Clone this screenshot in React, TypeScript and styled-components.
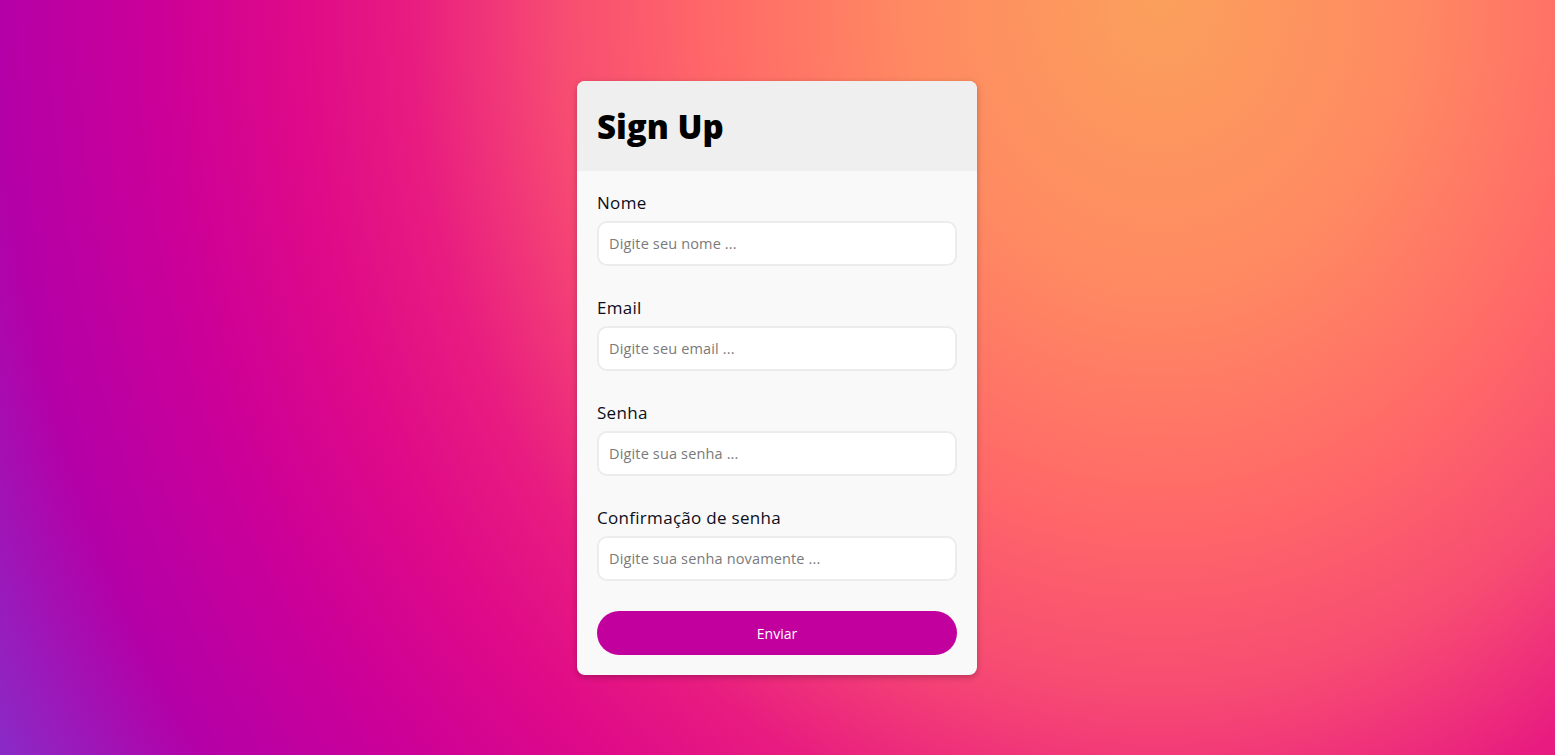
import React from 'react';
import styled, { createGlobalStyle } from 'styled-components';

const GlobalStyle = createGlobalStyle`
    * {
        box-sizing: border-box;
    }
    html, body {
        margin: 0;
        padding: 0;
        height: 100%;
    }
    body {
        font-family: 'Open Sans', 'Noto Sans', sans-serif;
    }
    #root {
        height: 100%;
    }
`;

// warm glow top-right fading to magenta / purple bottom-left
const Page = styled.main`
    min-height: 100vh;
    display: flex;
    justify-content: center;
    align-items: flex-start;
    padding: 81px 1px 0 0;
    background: radial-gradient(
        ellipse 1000px 1150px at 1160px 0px,
        #fba05c 0%,
        #ff8a62 25%,
        #ff6868 45%,
        #f74c72 60%,
        #e81c80 75%,
        #df0a88 86%,
        #cc0098 100%,
        #b400a7 116%,
        #8a2ac6 133%
    );
`;

const Card = styled.form`
    width: 400px;
    border-radius: 8px;
    overflow: hidden;
    background: #f9f9f9;
    box-shadow: 0 2px 6px rgba(0, 0, 0, 0.25);
`;

const Header = styled.header`
    height: 90px;
    display: flex;
    align-items: center;
    padding: 0 20px;
    background: #efefef;
`;

const Title = styled.h1`
    margin: 0;
    font-size: 33px;
    font-weight: 800;
    color: #000;
`;

const Body = styled.div`
    display: flex;
    flex-direction: column;
    padding: 20px;
`;

const Field = styled.div`
    display: flex;
    flex-direction: column;
    gap: 6px;
    margin-bottom: 30px;
`;

const Label = styled.label`
    font-size: 17px;
    line-height: 24px;
    letter-spacing: 0.3px;
    color: #0d0d1a;
`;

const Input = styled.input`
    height: 45px;
    width: 100%;
    padding: 0 10px;
    border: 2px solid #ececec;
    border-radius: 10px;
    background: #fff;
    font-family: inherit;
    font-size: 14.5px;
    letter-spacing: 0.15px;
    color: #222;
    outline: none;

    &::placeholder {
        color: #7a7a7a;
    }
`;

const Submit = styled.button`
    height: 44px;
    width: 100%;
    border: none;
    border-radius: 22px;
    background: #c2009e;
    color: #fff;
    font-family: inherit;
    font-size: 14px;
    font-weight: 500;
    cursor: pointer;
`;

const fields = [
    { id: 'nome', label: 'Nome', type: 'text', placeholder: 'Digite seu nome ...' },
    { id: 'email', label: 'Email', type: 'email', placeholder: 'Digite seu email ...' },
    { id: 'senha', label: 'Senha', type: 'password', placeholder: 'Digite sua senha ...' },
    { id: 'confirmacao', label: 'Confirmação de senha', type: 'password', placeholder: 'Digite sua senha novamente ...' },
];

export default function App() {
    return (
        <>
            <GlobalStyle />
            <Page>
                <Card onSubmit={(e) => e.preventDefault()}>
                    <Header>
                        <Title>Sign Up</Title>
                    </Header>
                    <Body>
                        {fields.map((f) => (
                            <Field key={f.id}>
                                <Label htmlFor={f.id}>{f.label}</Label>
                                <Input id={f.id} type={f.type} placeholder={f.placeholder} />
                            </Field>
                        ))}
                        <Submit type="submit">Enviar</Submit>
                    </Body>
                </Card>
            </Page>
        </>
    );
}
